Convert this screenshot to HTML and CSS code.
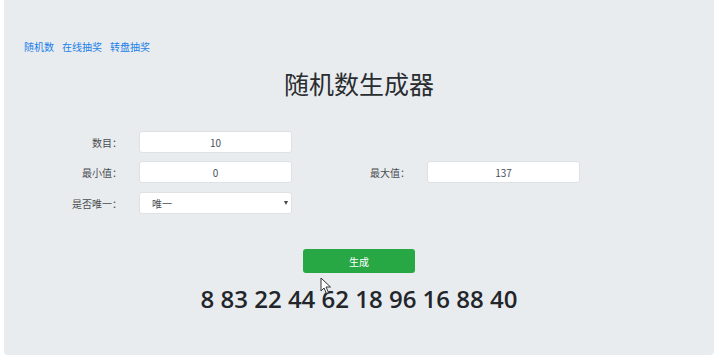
FILE: index.html
```html
<!DOCTYPE html>
<html lang="zh-CN">
<head>
<meta charset="utf-8">
<title>随机数生成器</title>
<link rel="stylesheet" href="styles.css">
</head>
<body>
<div class="jumbotron">
  <nav class="nav">
    <a href="#">随机数</a>
    <a href="#">在线抽奖</a>
    <a href="#">转盘抽奖</a>
  </nav>
  <h1 class="title">随机数生成器</h1>
  <form class="form">
    <div class="row">
      <div class="group">
        <label class="label">数目：</label>
        <input class="field" type="text" value="10">
      </div>
    </div>
    <div class="row">
      <div class="group">
        <label class="label">最小值：</label>
        <input class="field" type="text" value="0">
      </div>
      <div class="group">
        <label class="label">最大值：</label>
        <input class="field" type="text" value="137">
      </div>
    </div>
    <div class="row">
      <div class="group">
        <label class="label">是否唯一：</label>
        <div class="select-wrap">
          <select class="field select"><option>唯一</option></select>
          <span class="arrow"></span>
        </div>
      </div>
    </div>
    <div class="actions">
      <button type="button" class="btn">生成</button>
      <svg class="cursor" width="12" height="18" viewBox="0 0 12 18"><path d="M1 1 L1 14 L4 11 L6.5 16.5 L8.5 15.5 L6 10 L10.5 10 Z" fill="#fff" stroke="#333" stroke-width="1"/></svg>
    </div>
  </form>
  <div class="result">8 83 22 44 62 18 96 16 88 40</div>
</div>
</body>
</html>
```
FILE: styles.css
```css
html, body {
  margin: 0;
  padding: 0;
  background: #fff;
}
body {
  font-family: "Noto Sans CJK SC", "Noto Sans", sans-serif;
  color: #212529;
}
.jumbotron {
  margin: 0 6px 0 4px;
  height: 355px;
  background: #e9ecef;
  border-radius: 0 0 4px 4px;
  box-sizing: border-box;
  padding-top: 39px;
  position: relative;
}
.nav {
  display: flex;
  gap: 8px;
  padding-left: 20px;
  height: 16px;
  align-items: center;
}
.nav a {
  font-size: 10px;
  line-height: 16px;
  color: #1a7fe8;
  text-decoration: none;
}
.title {
  margin: 11px 0 0;
  text-align: center;
  font-size: 25px;
  font-weight: 400;
  line-height: 34px;
  color: #2a2d30;
}
.form {
  margin-top: 31px;
}
.row {
  display: flex;
  height: 22px;
  margin-bottom: 8px;
}
.row:nth-child(2) {
  margin-bottom: 9px;
}
.group {
  display: flex;
  align-items: center;
}
.label {
  width: 118px;
  margin-right: 17px;
  text-align: right;
  font-size: 10px;
  color: #4a4d50;
}
.field {
  width: 153px;
  height: 22px;
  box-sizing: border-box;
  border: 1px solid #dfe2e5;
  border-radius: 3px;
  background: #fff;
  font-family: "Noto Sans CJK SC", "Noto Sans", sans-serif;
  font-size: 10px;
  color: #495057;
  text-align: center;
  padding: 0 6px;
  outline: none;
}
.select-wrap {
  position: relative;
  width: 153px;
  height: 22px;
}
.select {
  appearance: none;
  -webkit-appearance: none;
  text-align: left;
  padding-left: 12px;
  display: block;
}
.arrow {
  position: absolute;
  right: 4px;
  top: 9px;
  width: 0;
  height: 0;
  border-left: 2.5px solid transparent;
  border-right: 2.5px solid transparent;
  border-top: 4px solid #444;
}
.actions {
  margin-top: 35px;
  display: flex;
  justify-content: center;
  position: relative;
}
.btn {
  width: 112px;
  height: 24px;
  border: none;
  border-radius: 3px;
  background: #28a745;
  color: #fff;
  font-family: "Noto Sans CJK SC", "Noto Sans", sans-serif;
  font-size: 10px;
  padding: 0;
}
.cursor {
  position: absolute;
  left: 316px;
  top: 28px;
}
.result {
  margin-top: 9px;
  text-align: center;
  font-family: "Open Sans", "Noto Sans", sans-serif;
  font-size: 24px;
  font-weight: 600;
  letter-spacing: 0;
  line-height: 34px;
  color: #22262a;
}
```
